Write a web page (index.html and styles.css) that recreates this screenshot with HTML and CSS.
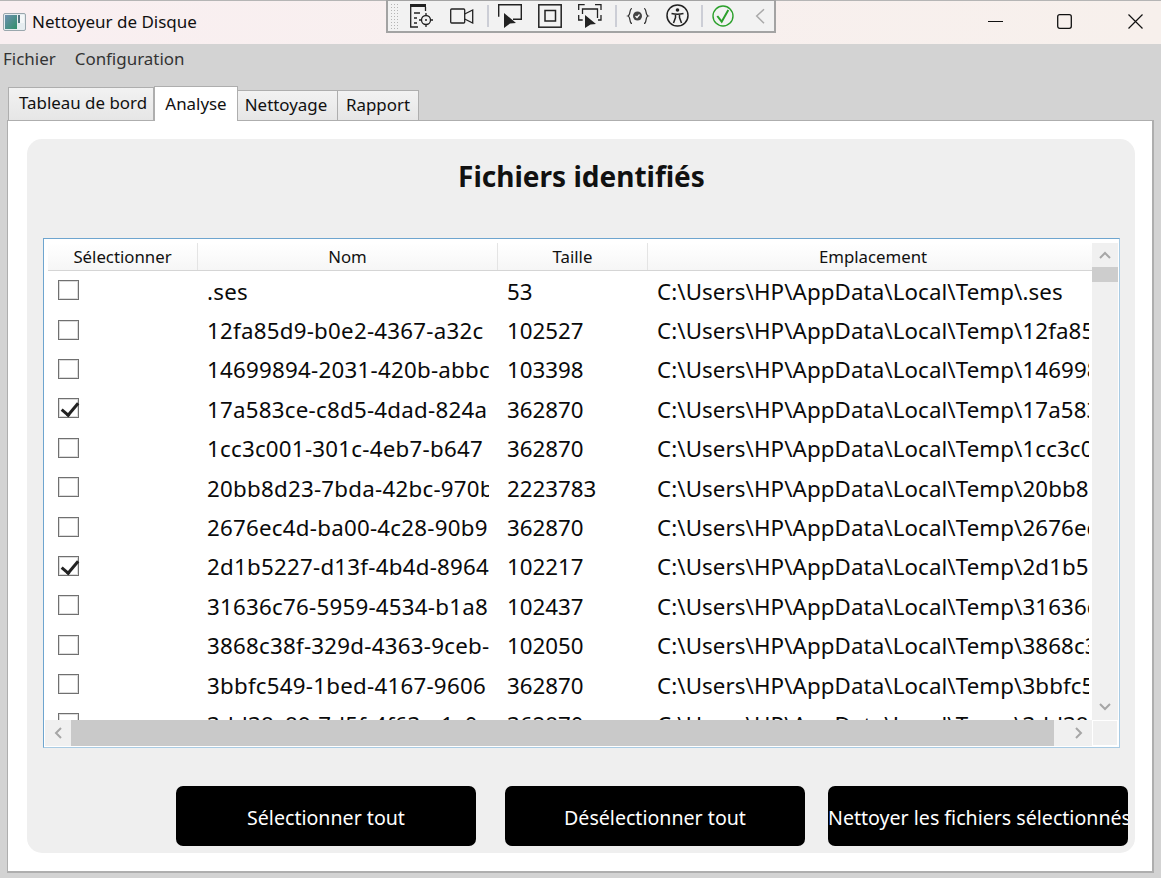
FILE: index.html
```html
<!DOCTYPE html>
<html lang="fr">

<head>
  <meta charset="UTF-8">
  <meta name="viewport" content="width=device-width, initial-scale=1.0">
  <title>Nettoyeur de Disque</title>
  <link rel="stylesheet" href="styles.css">
</head>

<body>
  <div class="window">
    <header class="titlebar">
      <svg class="app-icon" width="23" height="18" viewBox="0 0 23 18">
        <defs>
          <linearGradient id="appGrad" x1="0" y1="0" x2="1" y2="1">
            <stop offset="0" stop-color="#6f8fb0" />
            <stop offset="1" stop-color="#2f8f6a" />
          </linearGradient>
        </defs>
        <rect x="0.5" y="0.5" width="22" height="17" rx="1.5" fill="#e6edf0" stroke="#9aa7ad" />
        <rect x="2" y="2" width="12" height="14" fill="url(#appGrad)" />
        <rect x="15" y="2" width="6" height="8" fill="#f4f7f8" />
        <rect x="15" y="2" width="2" height="8" fill="#52737f" />
      </svg>
      <span class="app-title">Nettoyeur de Disque</span>
      <div class="window-btns">
        <svg width="15" height="15" viewBox="0 0 15 15"><path d="M0 7.500h15" stroke="#111" fill="none" /></svg>
        <svg width="15" height="15" viewBox="0 0 15 15"><rect x="0.700" y="0.700" width="13.600" height="13.600" rx="2" stroke="#111" stroke-width="1.300" fill="none" /></svg>
        <svg width="15" height="15" viewBox="0 0 15 15"><path d="M0.500 0.500l14 14M14.500 0.500l-14 14" stroke="#111" stroke-width="1.200" fill="none" /></svg>
      </div>
    </header>

    <div class="debug-bar">
      <span class="grip"></span>
      <svg class="dbg dbg--first" width="24" height="24" viewBox="0 0 24 24" fill="none" stroke="#222" stroke-width="1.300">
        <path d="M0 0h16v3H0z" fill="#222" stroke="none" />
        <path d="M0.700 3v20H8M15.500 3v4M4 9h6M4 14h3M4 19h3" />
        <circle cx="16" cy="16" r="4.500" />
        <circle cx="16" cy="16" r="1" fill="#222" stroke="none" />
        <path d="M16 9v3M16 20v3M9 16h3M20 16h3" />
      </svg>
      <svg class="dbg" width="24" height="16" viewBox="0 0 24 16" fill="none" stroke="#222" stroke-width="1.300">
        <rect x="0.700" y="1" width="14" height="14" rx="1" />
        <path d="M14.700 6l8-4v13l-8-4" />
      </svg>
      <span class="sep"></span>
      <svg class="dbg" width="24" height="24" viewBox="0 0 24 24" fill="none" stroke="#222" stroke-width="1.400">
        <path d="M0.700 12.700V0.700h22.600v14.600H15" />
        <path d="M6 9l12 10-6 .5-6 4.500z" fill="#222" stroke="none" />
      </svg>
      <svg class="dbg" width="24" height="24" viewBox="0 0 24 24" fill="none" stroke="#222" stroke-width="1.500">
        <rect x="0.800" y="0.800" width="22.400" height="22.400" />
        <rect x="7" y="6.500" width="10.500" height="10.500" />
      </svg>
      <svg class="dbg" width="24" height="24" viewBox="0 0 24 24" fill="none" stroke="#222" stroke-width="1.300">
        <path d="M0.700 6V0.700h6M17 0.700h6V6M0.700 11v5h4M23 11v5h-3M4.500 10V5h15v9" />
        <path d="M7 11l11 9-5.500.5-5.500 3.500z" fill="#222" stroke="none" />
      </svg>
      <span class="sep"></span>
      <svg class="dbg" width="24" height="18" viewBox="0 0 24 18" fill="none" stroke="#333" stroke-width="1.200">
        <path d="M6 1.500C3 1.500 5 8 2 9c3 1 1 7.500 4 7.500M18 1.500c3 0 1 6.500 4 7.500-3 1-1 7.500-4 7.500" />
        <circle cx="11.500" cy="9" r="4.500" fill="#444" stroke="none" />
        <path d="M9.500 9l1.500 1.500 2.500-3" stroke="#fff" />
      </svg>
      <svg class="dbg" width="24" height="24" viewBox="0 0 24 24" fill="none" stroke="#222" stroke-width="1.500">
        <circle cx="11.500" cy="11.500" r="10.500" />
        <circle cx="11.500" cy="6" r="1.800" fill="#222" stroke="none" />
        <path d="M5.500 9.500c4 1 8 1 12 0M9.500 10.500v3L7.500 19M13.500 10.500v3l2 5.500" />
      </svg>
      <span class="sep sep--tight"></span>
      <svg class="dbg" width="24" height="24" viewBox="0 0 24 24" fill="none" stroke="#2ba02b" stroke-width="1.400">
        <circle cx="11" cy="12" r="10" />
        <path d="M5.300 12l4.400 5.700L16.300 6" stroke-width="2" />
      </svg>
      <svg class="dbg" width="16" height="18" viewBox="0 0 16 18" fill="none" stroke="#a9a9a9" stroke-width="1.500"><path d="M12 2.300L4.700 9l7.300 7.300" /></svg>
    </div>

    <nav class="menu">
      <span>Fichier</span>
      <span>Configuration</span>
    </nav>

    <div class="tabs">
      <span class="tab tab--board">Tableau de bord</span>
      <span class="tab tab--active">Analyse</span>
      <span class="tab tab--clean">Nettoyage</span>
      <span class="tab tab--report">Rapport</span>
    </div>

    <main class="tab-panel">
      <section class="card">
        <h1 class="card-title">Fichiers identifiés</h1>

        <div class="grid">
          <div class="grid-body">
            <div class="grid-head">
              <div class="hcell hcell--check">Sélectionner</div>
              <div class="hcell hcell--name">Nom</div>
              <div class="hcell hcell--size">Taille</div>
              <div class="hcell hcell--path">Emplacement</div>
            </div>
            <div class="rows">
              <div class="row"><span class="check"></span><span class="cell cell--name">.ses</span><span class="cell cell--size">53</span><span class="cell cell--path">C:\Users\HP\AppData\Local\Temp\.ses</span></div>
              <div class="row"><span class="check"></span><span class="cell cell--name">12fa85d9-b0e2-4367-a32c</span><span class="cell cell--size">102527</span><span class="cell cell--path">C:\Users\HP\AppData\Local\Temp\12fa85d9</span></div>
              <div class="row"><span class="check"></span><span class="cell cell--name">14699894-2031-420b-abbc</span><span class="cell cell--size">103398</span><span class="cell cell--path">C:\Users\HP\AppData\Local\Temp\14699894</span></div>
              <div class="row"><span class="check check--on"></span><span class="cell cell--name">17a583ce-c8d5-4dad-824a</span><span class="cell cell--size">362870</span><span class="cell cell--path">C:\Users\HP\AppData\Local\Temp\17a583ce</span></div>
              <div class="row"><span class="check"></span><span class="cell cell--name">1cc3c001-301c-4eb7-b647</span><span class="cell cell--size">362870</span><span class="cell cell--path">C:\Users\HP\AppData\Local\Temp\1cc3c001</span></div>
              <div class="row"><span class="check"></span><span class="cell cell--name">20bb8d23-7bda-42bc-970b</span><span class="cell cell--size">2223783</span><span class="cell cell--path">C:\Users\HP\AppData\Local\Temp\20bb8d23</span></div>
              <div class="row"><span class="check"></span><span class="cell cell--name">2676ec4d-ba00-4c28-90b9</span><span class="cell cell--size">362870</span><span class="cell cell--path">C:\Users\HP\AppData\Local\Temp\2676ec4d</span></div>
              <div class="row"><span class="check check--on"></span><span class="cell cell--name">2d1b5227-d13f-4b4d-8964</span><span class="cell cell--size">102217</span><span class="cell cell--path">C:\Users\HP\AppData\Local\Temp\2d1b5227</span></div>
              <div class="row"><span class="check"></span><span class="cell cell--name">31636c76-5959-4534-b1a8</span><span class="cell cell--size">102437</span><span class="cell cell--path">C:\Users\HP\AppData\Local\Temp\31636c76</span></div>
              <div class="row"><span class="check"></span><span class="cell cell--name">3868c38f-329d-4363-9ceb-</span><span class="cell cell--size">102050</span><span class="cell cell--path">C:\Users\HP\AppData\Local\Temp\3868c38f</span></div>
              <div class="row"><span class="check"></span><span class="cell cell--name">3bbfc549-1bed-4167-9606</span><span class="cell cell--size">362870</span><span class="cell cell--path">C:\Users\HP\AppData\Local\Temp\3bbfc549</span></div>
              <div class="row"><span class="check"></span><span class="cell cell--name">3dd38c89-7d5f-4f63-a1c0</span><span class="cell cell--size">362870</span><span class="cell cell--path">C:\Users\HP\AppData\Local\Temp\3dd38c89</span></div>
            </div>
          </div>
          <div class="vscroll">
            <svg width="14" height="10" viewBox="0 0 14 10" fill="none" stroke="#a6a6a6" stroke-width="2"><path d="M2 8l5-5 5 5" /></svg>
            <div class="vscroll-track"><div class="vscroll-thumb"></div></div>
            <svg width="14" height="10" viewBox="0 0 14 10" fill="none" stroke="#a6a6a6" stroke-width="2"><path d="M2 2l5 5 5-5" /></svg>
          </div>
          <div class="hscroll">
            <svg width="10" height="14" viewBox="0 0 10 14" fill="none" stroke="#a6a6a6" stroke-width="2"><path d="M8 2L3 7l5 5" /></svg>
            <div class="hscroll-track"><div class="hscroll-thumb"></div></div>
            <svg width="10" height="14" viewBox="0 0 10 14" fill="none" stroke="#a6a6a6" stroke-width="2"><path d="M2 2l5 5-5 5" /></svg>
          </div>
          <div class="corner"></div>
        </div>

        <div class="actions">
          <button type="button" class="btn">Sélectionner tout</button>
          <button type="button" class="btn">Désélectionner tout</button>
          <button type="button" class="btn">Nettoyer les fichiers sélectionnés</button>
        </div>
      </section>
    </main>
  </div>
</body>

</html>
```

FILE: styles.css
```css
* {
  box-sizing: border-box;
}

html,
body {
  margin: 0;
  height: 100%;
  overflow: hidden;
}

body {
  font-family: "Noto Sans", "Open Sans", sans-serif;
  color: #111;
  background: #d3d3d3;
}

.window {
  position: relative;
  height: 878px;
  display: flex;
  flex-direction: column;
}

.titlebar {
  height: 44px;
  flex: none;
  display: flex;
  align-items: center;
  padding: 0 18px 2px 3px;
  background: linear-gradient(to right, #f9eff1, #f7f0ec);
  border-top: 1px solid #b5b5b5;
}

.app-icon {
  flex: none;
}

.app-title {
  margin-left: 6px;
  font-size: 17px;
}

.window-btns {
  margin-left: auto;
  display: flex;
}

.window-btns svg:nth-child(2) {
  margin: 0 56px 0 54px;
}

/* floating debug toolbar, sits over the title bar */
.debug-bar {
  position: absolute;
  left: 386px;
  top: 0;
  width: 390px;
  height: 33px;
  display: flex;
  align-items: center;
  padding-left: 2px;
  background: #f2f2f2;
  border: 2px solid #a3a3a3;
  border-top: 1px solid #a3a3a3;
}

.grip {
  width: 9px;
  height: 26px;
  background: radial-gradient(#b5b5b5 1px, transparent 1px) 0 0 / 3px 3px;
}

.sep {
  width: 2px;
  height: 22px;
  margin-left: 13px;
  background: #ccced6;
}

.sep--tight {
  margin-left: 11px;
}

.dbg {
  flex: none;
  margin-left: 16px;
}

.dbg--first {
  margin-left: 11px;
}

.sep + .dbg {
  margin-left: 9px;
}

.menu {
  height: 28px;
  margin-bottom: 2px;
  flex: none;
  display: flex;
  align-items: center;
  gap: 19px;
  padding-left: 3px;
  font-size: 16.950px;
  color: #333;
}

.tabs {
  height: 46px;
  flex: none;
  display: flex;
  align-items: flex-end;
  padding-left: 8px;
}

.tab {
  height: 30px;
  font-size: 16.900px;
  line-height: 27px;
  text-align: center;
  background: linear-gradient(#f2f2f2, #e6e6e6);
  border: 1px solid #aeaeae;
  border-bottom: 0;
  flex: none;
}

.tab--board {
  width: 146px;
  height: 33px;
  padding-left: 4px;
  line-height: 30px;
}

.tab--active {
  position: relative;
  z-index: 1;
  width: 84px;
  height: 35px;
  margin: 0 -1px -1px 0;
  line-height: 33px;
  background: #fff;
}

.tab--clean {
  width: 101px;
  padding-right: 3px;
  margin-right: -1px;
}

.tab--report {
  width: 82px;
}

.tab-panel {
  width: 1147px;
  height: 753px;
  margin-left: 7px;
  flex: none;
  padding: 18px 17px 18px 19px;
  background: #fff;
  border: 2px solid #aeaeae;
  border-width: 1px 2px 2px 1px;
}

.card {
  height: 100%;
  padding: 0 7px 7px 16px;
  background: #efefef;
  border-radius: 15px;
  display: flex;
  flex-direction: column;
}

.card-title {
  height: 99px;
  margin: 0 8px 0 0;
  padding-top: 15px;
  font-size: 28px;
  font-weight: 700;
  line-height: 44px;
  text-align: center;
  color: #111;
}

.grid {
  width: 1077px;
  height: 510px;
  flex: none;
  display: grid;
  grid-template-columns: 1fr 26px;
  grid-template-rows: 1fr 26px;
  background: #fff;
  border: 1px solid #6ea5cf;
  border-right-color: #a9cbe3;
  border-bottom-color: #a9cbe3;
  padding: 4px 1px 1px 4px;
}

.grid-body {
  overflow: hidden;
  min-width: 0;
}

.grid-head {
  height: 28px;
  display: flex;
  background: linear-gradient(#fff, #f6f6f6);
  border-bottom: 1px solid #d5d5d5;
  font-size: 16.800px;
  white-space: nowrap;
}

.hcell {
  flex: none;
  text-align: center;
  line-height: 28px;
  border-right: 1px solid #e4e4e4;
}

.hcell--check {
  width: 150px;
}

.hcell--name {
  width: 300px;
}

.hcell--size {
  width: 150px;
}

.hcell--path {
  width: 450px;
  border-right: 0;
}

.row {
  height: 39.400px;
  display: flex;
  align-items: center;
  font-size: 22.300px;
  white-space: nowrap;
  color: #0a0a0a;
}

.check {
  flex: none;
  width: 21px;
  height: 20px;
  margin: -1px 119px 0 10px;
  background: #fff;
  border: 1px solid #707070;
  box-shadow: inset 0 0 0 1px #dcdcdc;
  position: relative;
}

.check--on::after {
  content: "";
  position: absolute;
  left: 6px;
  top: 0;
  width: 7px;
  height: 14px;
  border: solid #222;
  border-width: 0 3px 3px 0;
  transform: rotate(40deg);
}

.cell {
  display: block;
  overflow: hidden;
  flex: none;
  padding: 1px 0 0 9px;
}

/* text is cut 9px before the column edge */
.cell--name {
  width: 291px;
  margin-right: 9px;
  letter-spacing: 0.250px;
}

.cell--size {
  width: 150px;
}

.cell--path {
  width: 441px;
  letter-spacing: 0.100px;
}

.vscroll {
  display: flex;
  flex-direction: column;
  align-items: center;
  background: #f0f0f0;
}

.vscroll svg {
  flex: none;
  margin: 7px 0;
}

.vscroll svg:last-child {
  margin-bottom: 8px;
}

.vscroll-track {
  flex: 1;
  width: 100%;
}

.vscroll-thumb {
  height: 15px;
  background: #cdcdcd;
}

.hscroll {
  display: flex;
  align-items: center;
  margin-left: -3px;
  background: #f0f0f0;
  position: relative;
}

.hscroll svg {
  flex: none;
  margin: 0 8px;
}

.hscroll-track {
  flex: 1;
  height: 100%;
}

.hscroll-thumb {
  width: 983px;
  height: 100%;
  background: #c9c9c9;
}

.corner {
  background: #f0f0f0;
  border: 1px solid #fff;
}

.actions {
  flex: 1;
  display: flex;
  align-items: flex-end;
  padding-left: 133px;
  gap: 29px;
}

.btn {
  width: 300px;
  height: 60px;
  flex: none;
  padding: 2px 0 0;
  overflow: hidden;
  white-space: nowrap;
  font: inherit;
  font-size: 19.600px;
  color: #fff;
  background: #000;
  border: 0;
  border-radius: 7px;
}

.btn:last-child {
  margin-left: -6px;
}
```
